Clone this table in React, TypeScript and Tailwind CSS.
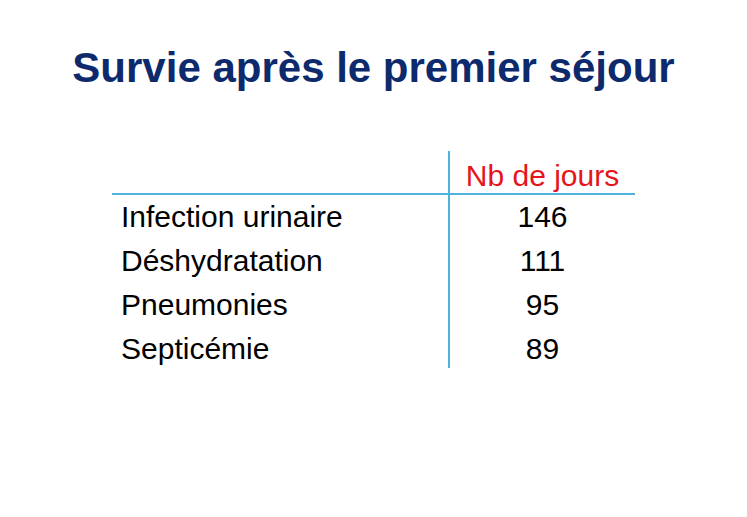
const rows = [
  { label: "Infection urinaire", days: "146" },
  { label: "Déshydratation", days: "111" },
  { label: "Pneumonies", days: "95" },
  { label: "Septicémie", days: "89" },
]

export default function App() {
  return (
    <main className="w-[747px] h-[517px] bg-white font-['Liberation_Sans',Arial,sans-serif] overflow-hidden">
      <h1 className="pt-[44px] text-center text-[42px] leading-[48px] font-bold text-[#0d2a6c]">
        Survie après le premier séjour
      </h1>

      <div className="mt-[59px] ml-[112px] w-[523px] grid grid-cols-[336px_187px] text-[30px] text-black">
        <div className="h-[44px] border-b-2 border-[#4fb3dc]" />
        <div className="h-[44px] pt-[10px] border-b-2 border-l-2 border-[#4fb3dc] text-center leading-[30px] text-[#e5141b]">
          Nb de jours
        </div>

        {rows.map((row, i) => {
          const last = i === rows.length - 1
          return [
            <div
              key={row.label}
              className={`pl-[9px] leading-[44px] ${last ? "h-[41px]" : "h-[44px]"}`}
            >
              {row.label}
            </div>,
            <div
              key={row.label + "-d"}
              className={`border-l-2 border-[#4fb3dc] text-center leading-[44px] ${last ? "h-[41px]" : "h-[44px]"}`}
            >
              {row.days}
            </div>,
          ]
        })}
      </div>
    </main>
  )
}
